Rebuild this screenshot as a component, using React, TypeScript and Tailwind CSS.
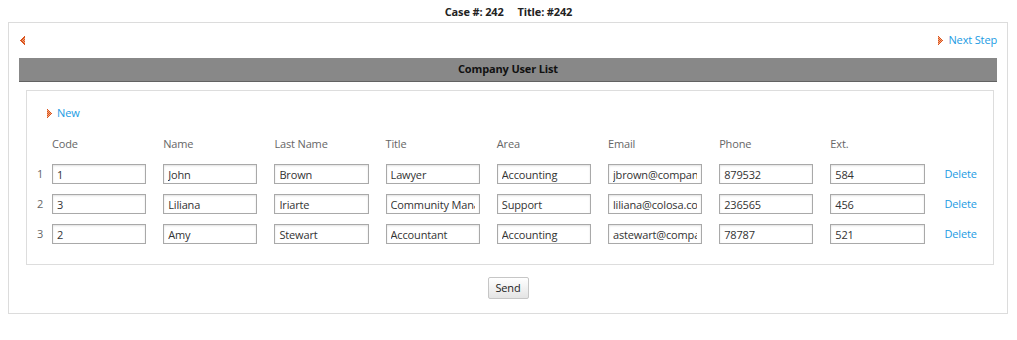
import React from "react";

type User = {
  code: string;
  name: string;
  lastName: string;
  title: string;
  area: string;
  email: string;
  phone: string;
  ext: string;
};

const users: User[] = [
  { code: "1", name: "John", lastName: "Brown", title: "Lawyer", area: "Accounting", email: "jbrown@company.com", phone: "879532", ext: "584" },
  { code: "3", name: "Liliana", lastName: "Iriarte", title: "Community Manager", area: "Support", email: "liliana@colosa.com", phone: "236565", ext: "456" },
  { code: "2", name: "Amy", lastName: "Stewart", title: "Accountant", area: "Accounting", email: "astewart@company.com", phone: "78787", ext: "521" },
];

const headers = ["Code", "Name", "Last Name", "Title", "Area", "Email", "Phone", "Ext."];

// small dotted triangle used by the ProcessMaker style links
const Arrow = ({ dir }: { dir: "left" | "right" }) => {
  const dots: React.ReactNode[] = [];
  for (let y = 0; y < 9; y++) {
    const span = Math.min(y, 8 - y);
    for (let i = 0; i <= span; i++) {
      const x = dir === "right" ? i : 5 - i;
      const dark = i === span || y === 0 || y === 8 || (x + y) % 2 === 0;
      dots.push(
        <rect key={`${x}-${y}`} x={x} y={y} width={1} height={1} fill={dark ? "#d9531e" : "#f4a57a"} />
      );
    }
  }
  return (
    <svg width="6" height="9" viewBox="0 0 6 9" className="shrink-0" shapeRendering="crispEdges">
      {dots}
    </svg>
  );
};

const Field = ({ value }: { value: string }) => (
  <input
    readOnly
    value={value}
    className="w-[94.2px] h-[20px] shrink-0 border border-[#a9a9a9] bg-white px-[4px] text-[11px] tracking-[-0.15px] text-[#333] shadow-[inset_0_1px_2px_rgba(0,0,0,0.12)] outline-none font-['Open_Sans']"
  />
);

export default function App() {
  return (
    <div className="w-[1017px] h-[340px] bg-white font-['Open_Sans',sans-serif] text-[11px] tracking-[-0.15px] text-[#333]">
      {/* Case header */}
      <div className="h-[22px] pt-[2px] flex items-center justify-center gap-[14px] font-bold text-[#222]">
        <span>Case #: 242</span>
        <span>Title: #242</span>
      </div>

      <div className="ml-[8px] w-[1000px] border border-[#dcdcdc] px-[10px] pb-[14px]">
        {/* Navigation */}
        <div className="mt-[8px] h-[18px] flex items-center justify-between">
          <a className="flex items-center cursor-pointer">
            <Arrow dir="left" />
          </a>
          <a className="flex items-center gap-[4px] text-[#1a9be3] cursor-pointer">
            <Arrow dir="right" />
            <span>Next Step</span>
          </a>
        </div>

        {/* Title bar */}
        <div className="mt-[9px] h-[24px] bg-[#888888] border-b border-[#626262] flex items-center justify-center font-bold text-[#111]">
          Company User List
        </div>

        {/* Grid */}
        <div className="mt-[8px] ml-[7px] mr-[3px] border border-[#dddddd] pt-[14px] pb-[20px]">
          <div className="h-[16px] pl-[20px] flex items-center gap-[4px]">
            <Arrow dir="right" />
            <a className="text-[#1a9be3] cursor-pointer">New</a>
          </div>

          <div className="mt-[15px] h-[16px] pl-[25px] flex items-center gap-[17px] text-[#666]">
            {headers.map((h) => (
              <div key={h} className="w-[94.2px] shrink-0">
                {h}
              </div>
            ))}
          </div>

          <div className="mt-[12px] flex flex-col gap-[10px]">
            {users.map((u, idx) => (
              <div key={u.code} className="h-[20px] pl-[10px] flex items-center">
                <span className="w-[15px] shrink-0 text-[#666]">{idx + 1}</span>
                <div className="flex items-center gap-[17px]">
                  <Field value={u.code} />
                  <Field value={u.name} />
                  <Field value={u.lastName} />
                  <Field value={u.title} />
                  <Field value={u.area} />
                  <Field value={u.email} />
                  <Field value={u.phone} />
                  <Field value={u.ext} />
                  <a className="ml-[3px] text-[#1a9be3] cursor-pointer">Delete</a>
                </div>
              </div>
            ))}
          </div>
        </div>

        {/* Submit */}
        <div className="mt-[12px] flex justify-center">
          <button className="w-[41px] h-[22px] border border-[#c6c6c6] rounded-[2px] bg-gradient-to-b from-white to-[#e4e4e4] text-[11px] text-[#222]">
            Send
          </button>
        </div>
      </div>
    </div>
  );
}
